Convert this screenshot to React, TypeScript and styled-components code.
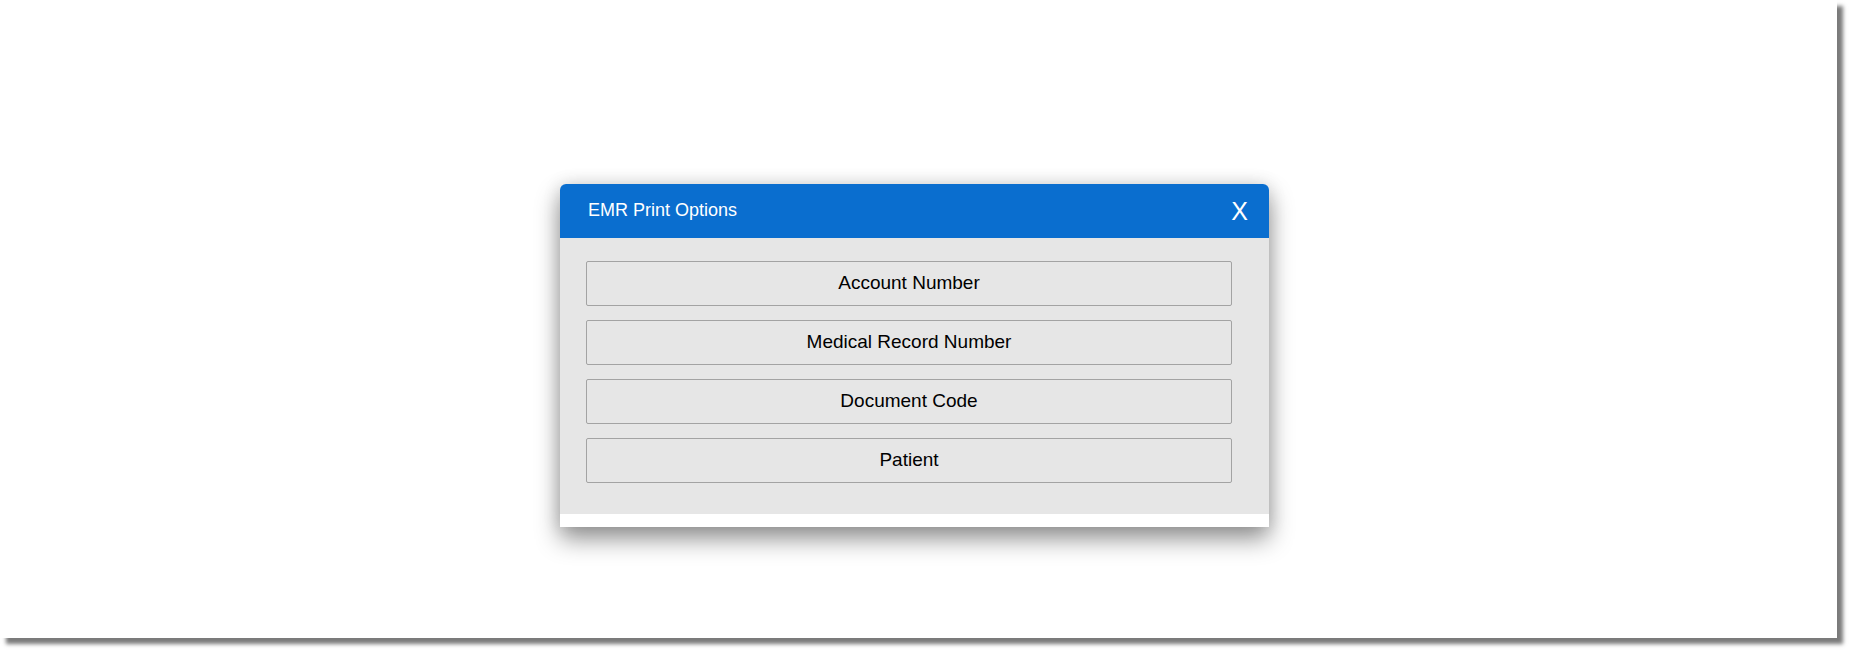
import { createGlobalStyle } from "styled-components"
import styled from "styled-components"

const GlobalStyle = createGlobalStyle`
    html, body {
        margin: 0;
        padding: 0;
        background: #ffffff;
        font-family: "Liberation Sans", Arial, sans-serif;
    }
`

const Viewport = styled.div`
    height: 650px;
    overflow: hidden;
`

const Page = styled.div`
    width: 1837px;
    height: 638px;
    background: #ffffff;
    box-shadow: 6px 6px 4px #7a7a7a;
    display: flex;
    justify-content: center;
    align-items: flex-start;
    padding-top: 184px;
    box-sizing: border-box;
`

const Dialog = styled.div`
    width: 709px;
    margin-left: -8px;
    background: #ffffff;
    border-radius: 6px 6px 0 0;
    box-shadow: 0 12px 24px rgba(0, 0, 0, 0.42), 0 0 18px rgba(0, 0, 0, 0.12);
    padding-bottom: 13px;
`

const Header = styled.div`
    height: 54px;
    background: #0a6ecf;
    border-radius: 6px 6px 0 0;
    display: flex;
    align-items: center;
    justify-content: space-between;
    padding: 0 21px 0 28px;
    color: #ffffff;
`

const Title = styled.span`
    font-size: 18px;
    margin-bottom: 1px;
`

const CloseButton = styled.button`
    background: none;
    border: none;
    color: #ffffff;
    font-family: "Liberation Sans", Arial, sans-serif;
    font-size: 25px;
    padding: 0;
    margin-top: 1px;
    cursor: pointer;
`

const Body = styled.div`
    background: #e6e6e6;
    padding: 23px 37px 31px 26px;
    display: flex;
    flex-direction: column;
    gap: 14px;
`

const OptionButton = styled.button`
    height: 45px;
    padding: 0 0 2px;
    background: #e6e6e6;
    border: 1px solid #a3a3a3;
    border-radius: 2px;
    font-family: "Liberation Sans", Arial, sans-serif;
    font-size: 19px;
    color: #000000;
    cursor: pointer;
`

const options = [
    "Account Number",
    "Medical Record Number",
    "Document Code",
    "Patient",
]

const App = () => {
    return (
        <Viewport>
            <GlobalStyle />
            <Page>
                <Dialog>
                    <Header>
                        <Title>EMR Print Options</Title>
                        <CloseButton>X</CloseButton>
                    </Header>
                    <Body>
                        {options.map((label) => (
                            <OptionButton key={label}>{label}</OptionButton>
                        ))}
                    </Body>
                </Dialog>
            </Page>
        </Viewport>
    )
}

export default App
